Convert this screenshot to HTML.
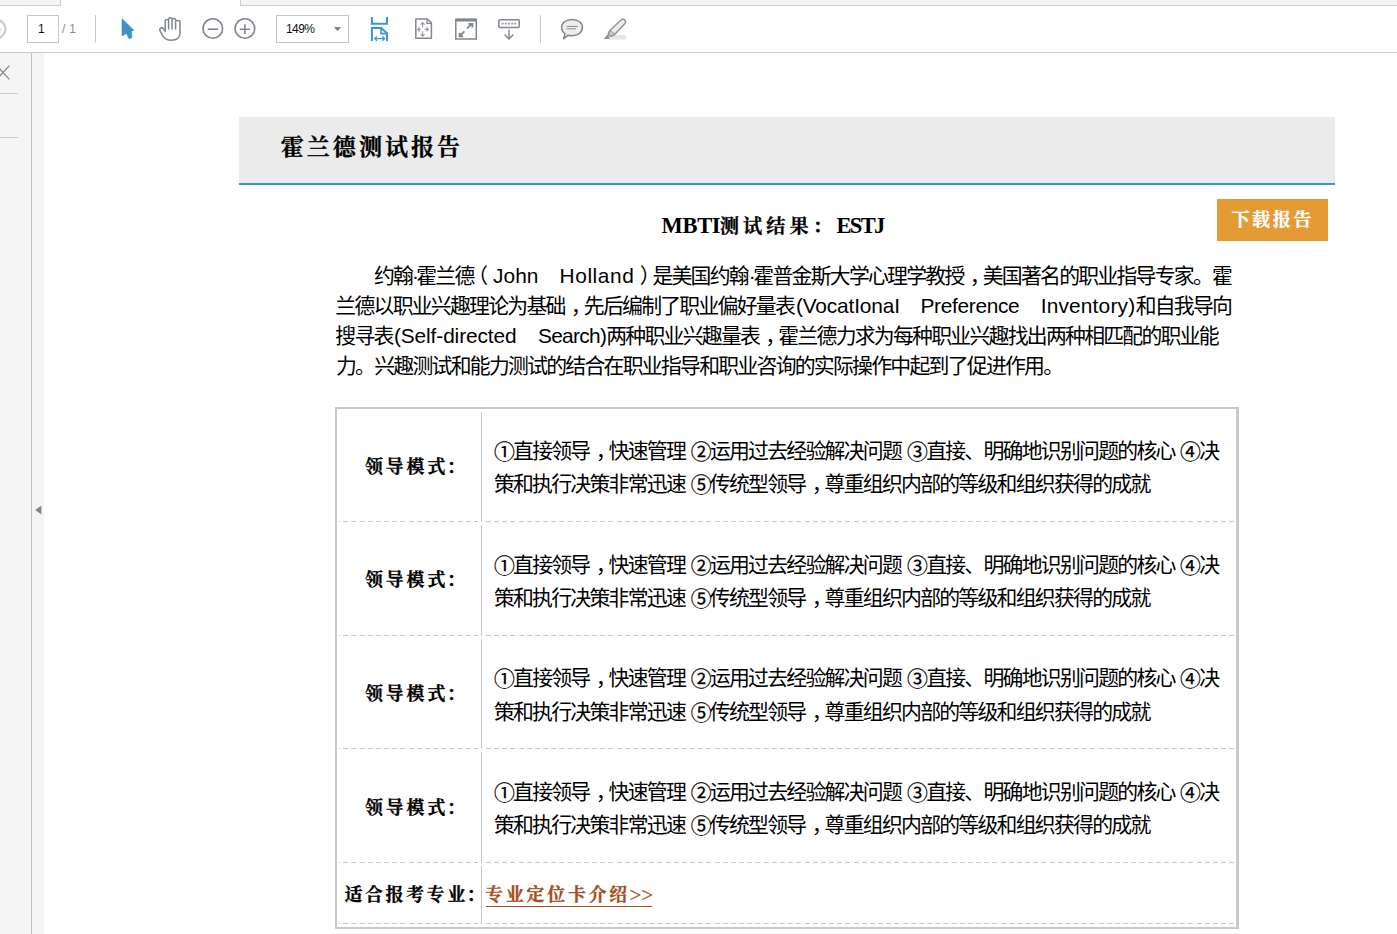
<!DOCTYPE html>
<html lang="zh-CN">
<head>
<meta charset="utf-8">
<title>霍兰德测试报告</title>
<style>
*{box-sizing:border-box;margin:0;padding:0}
html,body{width:1397px;height:934px;overflow:hidden;background:#fff}
body{position:relative;font-family:"Liberation Sans","Noto Sans CJK SC",sans-serif;color:#000}
.abs{position:absolute}
/* top chrome */
#toolbar{left:0;top:0;width:1397px;height:53px;background:#fff;border-bottom:1px solid #cbcbcb}
.tabg{top:0;height:6px;background:#f4f4f4;border-bottom:1px solid #cdcdcd}
.vsep{width:1px;height:28px;top:15px;background:#c9c9c9}
.box{border:1px solid #c6c6c6;background:#fff;height:28px;top:15px}
.ui{font-family:"Liberation Sans","Noto Sans CJK SC",sans-serif;font-size:12px;line-height:14px;white-space:nowrap}
/* left panels */
#lpanel{left:0;top:53px;width:32px;height:881px;background:#f5f5f5;border-right:1px solid #bfbfbf}
#lstrip{left:32px;top:53px;width:12px;height:881px;background:#f5f5f5}
.hl{left:0;width:18px;height:1px;background:#cccccc}
/* document */
.serif{font-family:"Liberation Serif","Noto Serif CJK SC",serif;font-weight:bold;-webkit-text-stroke:0.3px currentColor}
#hdr{left:239px;top:117px;width:1096px;height:68px;background:#ebebeb;border-bottom:2px solid #3b96c4}
#title{left:280.8px;top:132px;font-size:23px;line-height:32px;letter-spacing:3.03px;white-space:nowrap}
#mbti{left:661.6px;top:212px;font-size:19.2px;line-height:28px;letter-spacing:4.1px;white-space:nowrap}
#mbti .la{font-size:22.5px;display:inline-block;width:0;position:relative;white-space:nowrap;-webkit-text-stroke:0}
#btn{left:1217px;top:199px;width:111px;height:42px;background:#e49b36;color:#fff;font-size:18px;line-height:43px;padding-left:14.4px;letter-spacing:2.7px;white-space:nowrap}
.pl,.tx{font-size:20.86px;letter-spacing:-1.745px;white-space:nowrap}
.pl{line-height:30px;height:30px}
.tx{line-height:33px;height:33px}
.g{display:inline-block;width:0;height:0}
.z{display:inline-block;width:0;position:relative;letter-spacing:0;white-space:nowrap;vertical-align:baseline}
.en{font-size:20.86px}
#tbl{left:335px;top:407px;width:904px;height:522px;border:2px solid #c9c9c9;border-right-width:3px}
.lab{font-size:17.9px;line-height:24px;letter-spacing:2.95px;white-space:nowrap}
.co{margin-left:-1.6px}
.cn{position:relative;top:1.2px;-webkit-text-stroke:0.25px currentColor}
.lnk{color:#a4501e}
.gt{display:inline-block;width:0;position:relative;left:-0.6px;top:0.6px;font-size:21px;letter-spacing:0;font-weight:normal;-webkit-text-stroke:0.2px currentColor;line-height:0}
</style>
</head>
<body>
<!-- chrome -->
<div id="toolbar" class="abs"></div>
<div class="abs tabg" style="left:0;width:61px;border-right:1px solid #cdcdcd"></div>
<div class="abs tabg" style="left:240px;width:1157px;border-left:1px solid #cdcdcd"></div>
<div class="abs box" style="left:27px;width:32px"></div>
<div class="abs ui" style="left:38px;top:22px;color:#111">1</div>
<div class="abs ui" style="left:62px;top:22px;color:#8a8a8a;letter-spacing:4px">/1</div>
<div class="abs vsep" style="left:95px"></div>
<div class="abs box" style="left:276px;width:73px"></div>
<div class="abs ui" style="left:286px;top:22px;color:#111;letter-spacing:-0.6px">149%</div>
<div class="abs vsep" style="left:540px"></div>
<div id="lpanel" class="abs"></div>
<div id="lstrip" class="abs"></div>
<div class="abs hl" style="top:93px"></div>
<div class="abs hl" style="top:137px"></div>
<svg class="abs" style="left:0;top:0" width="700" height="934" viewBox="0 0 700 934" fill="none" stroke-linecap="butt">
<!-- prev page (cropped) -->
<circle cx="-3.8" cy="29" r="9.3" stroke="#cacaca" stroke-width="2.2"/>
<path d="M-2 29.5H1.2" stroke="#c6c6c6" stroke-width="1.4"/>
<!-- select arrow -->
<path d="M122 18.6L134 30.4L131.4 31L132 37.4L130 38.8L128.4 38L126.6 33.4L122 36Z" fill="#3d93c4" stroke="#3d93c4" stroke-width="0.6" stroke-linejoin="round"/>
<!-- hand -->
<g stroke="#82868f" stroke-width="1.5" stroke-linejoin="round" stroke-linecap="round">
<path d="M165.2 31.5V20.6Q165.2 19.4 167 19.4Q168.6 19.4 168.6 20.6M168.6 29V19Q168.6 17.8 170.4 17.8Q172 17.8 172 19M172 29V19.6Q172 18.6 173.8 18.6Q175.6 18.6 175.6 19.8M175.6 29V21.6Q175.6 20.6 177.6 20.6Q180 20.6 180 22.2V33Q180 40.2 171 40.2Q165.6 40.2 162.6 35.6L159.8 30.4Q159.2 28.6 160.8 27.8Q162.6 27.2 163.6 28.8L165.2 31.5"/>
</g>
<!-- zoom out / in -->
<g stroke="#82868f" stroke-width="1.6">
<circle cx="212.8" cy="28.5" r="9.8"/>
<path d="M207.8 29.2H218"/>
<circle cx="244.9" cy="28.5" r="9.8"/>
<path d="M239.8 29.2H250M244.9 24.2V34"/>
</g>
<!-- dropdown caret -->
<path d="M334 27H341L337.5 31.2Z" fill="#808080"/>
<!-- fit width -->
<g stroke="#3a97cb" stroke-width="2" stroke-linejoin="miter">
<path d="M371.9 17V23.8H387V17"/>
<path d="M371.9 41V28H381.2L387 33.2V41"/>
<path d="M381 28.4V33.6H386.6" stroke-width="1.6"/>
<path d="M375.4 38.6H384" stroke-width="1.3"/>
<path d="M377 36.4L374.8 38.6L377 40.8M382.4 36.4L384.6 38.6L382.4 40.8" stroke-width="1.3"/>
</g>
<!-- fit page -->
<g stroke="#82868f" stroke-width="1.5">
<path d="M415.8 19H427.4L431.4 22.8V38.2H415.8Z" stroke-linejoin="round"/>
<path d="M427 19.2V23.4H431.2" stroke-width="1.2"/>
<g stroke-width="1.1" stroke="#9a9a9a">
<path d="M422.6 27.4V22.6M420.6 24.6L422.6 22.6L424.6 24.6"/>
<path d="M422.6 31.4V36.2M420.6 34.2L422.6 36.2L424.6 34.2"/>
<path d="M420.6 29.4H417.6M419.6 27.4L417.6 29.4L419.6 31.4"/>
<path d="M424.6 29.4H428.4M426.4 27.4L428.4 29.4L426.4 31.4"/>
</g>
</g>
<!-- full screen -->
<g stroke="#80858f" stroke-width="1.5">
<path d="M455.8 19.5H476.3V39H455.8Z"/>
<path d="M455.8 20H476.3" stroke-width="3"/>
<g stroke-width="1.8">
<path d="M467 28.4L472 23.8M468.6 23.8H472.4V27.4"/>
<path d="M464.4 31.4L459.8 36M463.2 36.4H459.6V32.8"/>
</g>
</g>
<!-- keyboard / scroll -->
<g stroke="#80858f" stroke-width="1.5">
<rect x="498.8" y="19.8" width="20.4" height="7.6" rx="1.2"/>
<path d="M501.6 23.6H516.6" stroke-width="1.8" stroke-dasharray="2 1.2" stroke="#9a9a9a"/>
<path d="M509 29.4V38.8M504.6 34.6L509 39L513.4 34.6" stroke-width="1.4"/>
</g>
<!-- comment -->
<g stroke="#80858f" stroke-width="1.5">
<path d="M572 19.4C578.4 19.4 582.4 23 582.4 27.6C582.4 32.4 578 35.8 572 35.8C570.6 35.8 569.4 35.6 568.2 35.2L563.6 38.8L565 33.8C562.8 32.2 561.6 30 561.6 27.6C561.6 23 565.8 19.4 572 19.4Z" fill="#ededed" stroke-linejoin="round"/>
<path d="M566.6 26.4H578M566.6 28.8H576" stroke-width="1" stroke="#8a8a8a"/>
</g>
<!-- highlighter -->
<rect x="609" y="35" width="17" height="4.6" fill="#e6e6e6"/>
<g stroke="#8f9196" stroke-width="1.4" stroke-linejoin="round">
<path d="M621.6 19.6Q623 18.4 624.4 19.8L625.2 20.8Q626.2 22 625 23.4L614.6 34.6L609.8 30.4Z" fill="#ececec"/>
<path d="M609.8 30.4L608.2 33.8L611 36.4L614.6 34.6" fill="#c9cacc"/>
<path d="M608 34.6L604.4 38.6H609Z" fill="#8f9196" stroke-width="1"/>
</g>
<!-- left panel close x -->
<path d="M-2.6 66.4L9.4 79.4M9.4 65.6L-2.6 78.6" stroke="#858a93" stroke-width="1.3"/>
<!-- collapse arrow -->
<path d="M41.4 505.4V514.6L35.2 510Z" fill="#80848c"/>
</svg>
<!-- document -->
<div id="hdr" class="abs"></div>
<div id="title" class="abs serif">霍兰德测试报告</div>
<div id="mbti" class="abs serif"><span class="la" style="letter-spacing:-0.35px">MBTI</span><span class="g" style="margin-left:58.1px"></span>测试结果：<span class="la" style="left:0.4px;letter-spacing:-1.7px">ESTJ</span></div>
<div id="btn" class="abs serif">下载报告</div>

<div class="abs pl" style="left:373.90px;top:261px">约翰<span class="z p" style="left:-0.16px">·</span><span class="g" style="margin-left:4.14px"></span>霍兰德<span class="z p" style="left:-6.29px">（</span><span class="z en" style="left:19.51px;letter-spacing:0.033px">John</span><span class="z en" style="left:86.01px;letter-spacing:0.567px">Holland</span><span class="z p" style="left:166.11px">）</span><span class="g" style="margin-left:178.81px"></span>是美国约翰<span class="z p" style="left:0.85px">·</span><span class="g" style="margin-left:5.35px"></span>霍普金斯大学心理学教授<span class="z p" style="left:6.20px">，</span><span class="g" style="margin-left:19.13px"></span>美国著名的职业指导专家。霍</div>
<div class="abs pl" style="left:335.30px;top:291px">兰德以职业兴趣理论为基础<span class="z p" style="left:6.20px">，</span><span class="g" style="margin-left:19.13px"></span>先后编制了职业偏好量表<span class="z en" style="left:1.88px;letter-spacing:-0.150px">(VocatIonaI</span><span class="z en" style="left:126.48px;letter-spacing:-0.322px">Preference</span><span class="z en" style="left:246.58px;letter-spacing:0.189px">Inventory)</span><span class="g" style="margin-left:341.58px"></span>和自我导向</div>
<div class="abs pl" style="left:335.30px;top:321px">搜寻表<span class="z en" style="left:1.31px;letter-spacing:-0.108px">(Self-directed</span><span class="z en" style="left:145.31px;letter-spacing:-0.667px">Search)</span><span class="g" style="margin-left:213.61px"></span>两种职业兴趣量表<span class="z p" style="left:6.20px">，</span><span class="g" style="margin-left:19.13px"></span>霍兰德力求为每种职业兴趣找出两种相匹配的职业能</div>
<div class="abs pl" style="left:336.00px;top:351px">力。兴趣测试和能力测试的结合在职业指导和职业咨询的实际操作中起到了促进作用。</div>

<div id="tbl" class="abs"></div>
<svg class="abs" style="left:0;top:0" width="1397" height="934" viewBox="0 0 1397 934" shape-rendering="crispEdges">
<line x1="339" y1="521.5" x2="478" y2="521.5" stroke="#c7c7c7" stroke-width="1" stroke-dasharray="5 3.17" stroke-dashoffset="4"/>
<line x1="484" y1="521.5" x2="1235" y2="521.5" stroke="#c7c7c7" stroke-width="1" stroke-dasharray="5 3.17" stroke-dashoffset="6.3"/>
<line x1="339" y1="635.5" x2="478" y2="635.5" stroke="#c7c7c7" stroke-width="1" stroke-dasharray="5 3.17" stroke-dashoffset="4"/>
<line x1="484" y1="635.5" x2="1235" y2="635.5" stroke="#c7c7c7" stroke-width="1" stroke-dasharray="5 3.17" stroke-dashoffset="6.3"/>
<line x1="339" y1="748.5" x2="478" y2="748.5" stroke="#c7c7c7" stroke-width="1" stroke-dasharray="5 3.17" stroke-dashoffset="4"/>
<line x1="484" y1="748.5" x2="1235" y2="748.5" stroke="#c7c7c7" stroke-width="1" stroke-dasharray="5 3.17" stroke-dashoffset="6.3"/>
<line x1="339" y1="862.5" x2="478" y2="862.5" stroke="#c7c7c7" stroke-width="1" stroke-dasharray="5 3.17" stroke-dashoffset="4"/>
<line x1="484" y1="862.5" x2="1235" y2="862.5" stroke="#c7c7c7" stroke-width="1" stroke-dasharray="5 3.17" stroke-dashoffset="6.3"/>
<line x1="339" y1="923.5" x2="478" y2="923.5" stroke="#c7c7c7" stroke-width="1" stroke-dasharray="5 3.17" stroke-dashoffset="4"/>
<line x1="484" y1="923.5" x2="1235" y2="923.5" stroke="#c7c7c7" stroke-width="1" stroke-dasharray="5 3.17" stroke-dashoffset="6.3"/>
<line x1="481.5" y1="412" x2="481.5" y2="522" stroke="#c6c6c6" stroke-width="1"/>
<line x1="481.5" y1="525" x2="481.5" y2="636" stroke="#c6c6c6" stroke-width="1"/>
<line x1="481.5" y1="639" x2="481.5" y2="749" stroke="#c6c6c6" stroke-width="1"/>
<line x1="481.5" y1="752" x2="481.5" y2="863" stroke="#c6c6c6" stroke-width="1"/>
<line x1="481.5" y1="866" x2="481.5" y2="924" stroke="#c6c6c6" stroke-width="1"/>
</svg>
<div class="abs lab serif" style="left:364.9px;top:454.7px">领导模式<span class="co">：</span></div>
<div class="abs tx" style="left:493.90px;top:434.0px"><span class="cn">①</span>直接领导<span class="z p" style="left:6.20px">，</span><span class="g" style="margin-left:19.13px"></span>快速管理<span class="g" style="margin-left:5.70px"></span><span class="cn">②</span>运用过去经验解决问题<span class="g" style="margin-left:5.97px"></span><span class="cn">③</span>直接、明确地识别问题的核心<span class="g" style="margin-left:5.48px"></span><span class="cn">④</span>决</div>
<div class="abs tx" style="left:493.90px;top:467.2px">策和执行决策非常迅速<span class="g" style="margin-left:5.70px"></span><span class="cn">⑤</span>传统型领导<span class="z p" style="left:6.20px">，</span><span class="g" style="margin-left:19.13px"></span>尊重组织内部的等级和组织获得的成就</div>
<div class="abs lab serif" style="left:364.9px;top:568.4px">领导模式<span class="co">：</span></div>
<div class="abs tx" style="left:493.90px;top:547.7px"><span class="cn">①</span>直接领导<span class="z p" style="left:6.20px">，</span><span class="g" style="margin-left:19.13px"></span>快速管理<span class="g" style="margin-left:5.70px"></span><span class="cn">②</span>运用过去经验解决问题<span class="g" style="margin-left:5.97px"></span><span class="cn">③</span>直接、明确地识别问题的核心<span class="g" style="margin-left:5.48px"></span><span class="cn">④</span>决</div>
<div class="abs tx" style="left:493.90px;top:580.9px">策和执行决策非常迅速<span class="g" style="margin-left:5.70px"></span><span class="cn">⑤</span>传统型领导<span class="z p" style="left:6.20px">，</span><span class="g" style="margin-left:19.13px"></span>尊重组织内部的等级和组织获得的成就</div>
<div class="abs lab serif" style="left:364.9px;top:682.0px">领导模式<span class="co">：</span></div>
<div class="abs tx" style="left:493.90px;top:661.3px"><span class="cn">①</span>直接领导<span class="z p" style="left:6.20px">，</span><span class="g" style="margin-left:19.13px"></span>快速管理<span class="g" style="margin-left:5.70px"></span><span class="cn">②</span>运用过去经验解决问题<span class="g" style="margin-left:5.97px"></span><span class="cn">③</span>直接、明确地识别问题的核心<span class="g" style="margin-left:5.48px"></span><span class="cn">④</span>决</div>
<div class="abs tx" style="left:493.90px;top:694.5px">策和执行决策非常迅速<span class="g" style="margin-left:5.70px"></span><span class="cn">⑤</span>传统型领导<span class="z p" style="left:6.20px">，</span><span class="g" style="margin-left:19.13px"></span>尊重组织内部的等级和组织获得的成就</div>
<div class="abs lab serif" style="left:364.9px;top:795.7px">领导模式<span class="co">：</span></div>
<div class="abs tx" style="left:493.90px;top:775.0px"><span class="cn">①</span>直接领导<span class="z p" style="left:6.20px">，</span><span class="g" style="margin-left:19.13px"></span>快速管理<span class="g" style="margin-left:5.70px"></span><span class="cn">②</span>运用过去经验解决问题<span class="g" style="margin-left:5.97px"></span><span class="cn">③</span>直接、明确地识别问题的核心<span class="g" style="margin-left:5.48px"></span><span class="cn">④</span>决</div>
<div class="abs tx" style="left:493.90px;top:808.2px">策和执行决策非常迅速<span class="g" style="margin-left:5.70px"></span><span class="cn">⑤</span>传统型领导<span class="z p" style="left:6.20px">，</span><span class="g" style="margin-left:19.13px"></span>尊重组织内部的等级和组织获得的成就</div>
<div class="abs lab serif" style="left:344.4px;top:883px;letter-spacing:2.72px">适合报考专业<span class="co">：</span></div>
<div class="abs lab serif lnk" style="left:485.2px;top:883px;letter-spacing:2.8px">专业定位卡介绍<span class="gt">&gt;&gt;</span></div>
<div class="abs" style="left:486px;top:906px;width:166px;height:1px;background:#a4501e"></div>
</body>
</html>
